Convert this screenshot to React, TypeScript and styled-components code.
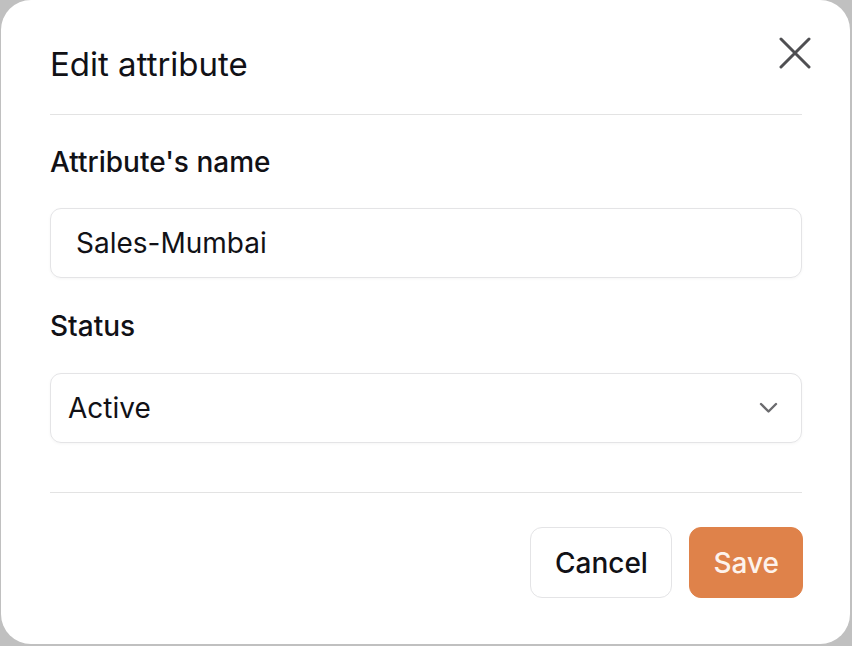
import React from 'react';
import styled, { createGlobalStyle } from 'styled-components';

const GlobalStyle = createGlobalStyle`
  html, body {
    margin: 0;
    padding: 0;
    background: #c0c0c0;
    font-family: Inter, "Noto Sans", sans-serif;
    color: #111116;
  }
`;

const Page = styled.div`
  width: 852px;
  height: 646px;
  padding-left: 1px;
  box-sizing: border-box;
`;

const Dialog = styled.div`
  width: 849px;
  height: 644px;
  box-sizing: border-box;
  background: #ffffff;
  border-radius: 30px;
  padding: 0 48px 0 49px;
  display: flex;
  flex-direction: column;
`;

const Header = styled.div`
  height: 115px;
  box-sizing: border-box;
  border-bottom: 1px solid #e3e3e3;
  display: flex;
  justify-content: space-between;
  align-items: flex-start;
`;

const Title = styled.h2`
  margin: 44px 0 0;
  font-size: 33px;
  line-height: 40px;
  font-weight: 400;
  color: #111116;
`;

const CloseButton = styled.button`
  margin: 37px -9px 0 0;
  padding: 0;
  border: none;
  background: none;
  width: 32px;
  height: 32px;
  display: flex;
  cursor: pointer;
`;

const Form = styled.div`
  display: flex;
  flex-direction: column;
  padding-top: 31px;
  padding-bottom: 49px;
  border-bottom: 1px solid #e3e3e3;
`;

const Label = styled.label<{ $gap: number }>`
  font-size: 28px;
  line-height: 32px;
  font-weight: 500;
  margin-bottom: ${p => p.$gap}px;
`;

const Field = styled.div<{ $pad: number }>`
  height: 70px;
  box-sizing: border-box;
  border: 1.5px solid #e4e4e6;
  border-radius: 11px;
  padding: 0 22px 0 ${p => p.$pad}px;
  display: flex;
  align-items: center;
  justify-content: space-between;
  font-size: 28px;
  color: #111116;
  box-shadow: 0 1px 3px rgba(0, 0, 0, 0.04);
  margin-bottom: 32px;

  &:last-child {
    margin-bottom: 0;
  }
`;

const Footer = styled.div`
  display: flex;
  justify-content: flex-end;
  gap: 17px;
  padding-top: 34px;
  margin-right: -1px;
`;

const Button = styled.button<{ $primary?: boolean }>`
  height: 71px;
  box-sizing: border-box;
  padding: 0 ${p => (p.$primary ? 23 : 23.5)}px;
  border-radius: 12px;
  font-family: Inter, "Noto Sans", sans-serif;
  font-size: 28px;
  font-weight: 500;
  cursor: pointer;
  border: 1.5px solid ${p => (p.$primary ? '#df824a' : '#e4e4e6')};
  background: ${p => (p.$primary ? '#df824a' : '#ffffff')};
  color: ${p => (p.$primary ? '#fdf3ec' : '#111116')};
`;

const Chevron = () => (
  <svg width="20" height="12" viewBox="0 0 20 12" fill="none">
    <path d="M2 2l7.5 7.5L17 2" stroke="#6b6b6e" strokeWidth="2.4" strokeLinecap="round" strokeLinejoin="round" />
  </svg>
);

const App: React.FC = () => (
  <Page>
    <GlobalStyle />
    <Dialog>
      <Header>
        <Title>Edit attribute</Title>
        <CloseButton aria-label="Close">
          <svg width="32" height="32" viewBox="0 0 32 32" fill="none">
            <path d="M2 2l28 28M30 2L2 30" stroke="#4f4f52" strokeWidth="3" strokeLinecap="round" />
          </svg>
        </CloseButton>
      </Header>
      <Form>
        <Label $gap={30}>Attribute's name</Label>
        <Field $pad={25}>Sales-Mumbai</Field>
        <Label $gap={31}>Status</Label>
        <Field $pad={17}>
          Active
          <Chevron />
        </Field>
      </Form>
      <Footer>
        <Button>Cancel</Button>
        <Button $primary>Save</Button>
      </Footer>
    </Dialog>
  </Page>
);

export default App;
